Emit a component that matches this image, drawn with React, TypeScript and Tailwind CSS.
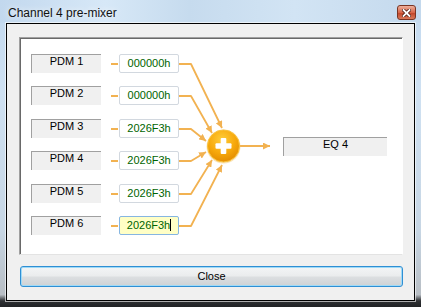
import React from "react";

interface Row {
  name: string;
  value: string;
  focused?: boolean;
}

const rows: Row[] = [
  { name: "PDM 1", value: "000000h" },
  { name: "PDM 2", value: "000000h" },
  { name: "PDM 3", value: "2026F3h" },
  { name: "PDM 4", value: "2026F3h" },
  { name: "PDM 5", value: "2026F3h" },
  { name: "PDM 6", value: "2026F3h", focused: true },
];

// page-space row centres and where each feed line hits the sum node
const mids = [64, 96, 129, 161, 194, 226];
const tips: [number, number][] = [
  [222, 128],
  [212, 133],
  [206, 141],
  [206, 152],
  [212, 160],
  [222, 165],
];

const ORANGE = "#f2b251";

function MixerLines() {
  return (
    <svg
      className="absolute left-0 top-0 pointer-events-none overflow-visible"
      width={382}
      height={216}
    >
      <defs>
        <marker
          id="head"
          viewBox="0 0 8 8"
          refX="8"
          refY="4"
          markerWidth="7"
          markerHeight="7"
          markerUnits="userSpaceOnUse"
          orient="auto"
        >
          <path d="M0,0 L8,4 L0,8 z" fill={ORANGE} />
        </marker>
        <radialGradient id="ball" cx="45%" cy="30%" r="75%">
          <stop offset="0%" stopColor="#ffcd3a" />
          <stop offset="55%" stopColor="#f7a90c" />
          <stop offset="100%" stopColor="#e08800" />
        </radialGradient>
      </defs>
      <g transform="translate(-20,-38)">
        {mids.map((y, i) => (
          <g key={i}>
            <path d={`M111 ${y} H118`} stroke={ORANGE} strokeWidth={2} fill="none" />
            <path
              d={`M179 ${y} H191 L${tips[i][0]} ${tips[i][1]}`}
              stroke={ORANGE}
              strokeWidth={1.8}
              fill="none"
              strokeLinejoin="round"
              markerEnd="url(#head)"
            />
          </g>
        ))}
        <path d="M240 146 H270" stroke={ORANGE} strokeWidth={2} markerEnd="url(#head)" />
        <circle cx={223.5} cy={146.5} r={17} fill="#f6c86a" opacity={0.5} />
        <circle cx={223.5} cy={146} r={16} fill="url(#ball)" stroke="#f9c23c" strokeWidth={1} />
        <rect x={215.5} y={143.2} width={16} height={5.6} rx={1} fill="#fff" />
        <rect x={220.7} y={138} width={5.6} height={16} rx={1} fill="#fff" />
      </g>
    </svg>
  );
}

export default function App() {
  return (
    <div
      className="w-[421px] h-[307px] flex flex-col overflow-hidden bg-[linear-gradient(180deg,#c3d9ef_0%,#cfe1f2_30%,#c7d6e4_75%,#b8bec4_96%,#2e3033_98%,#202224_100%)]"
      style={{ fontFamily: '"Liberation Sans", Arial, sans-serif' }}
    >
      <div className="h-[23px] flex items-center justify-between pl-[8px] pr-[5px] bg-[linear-gradient(90deg,#c2d8ee_0%,#d7e8f7_25%,#c6dbee_45%,#d2e4f4_70%,#c4d9ed_100%)]">
        <span className="text-[12px] text-[#111] leading-none pt-[2px] [text-shadow:0_0_6px_#ffffff]">
          Channel 4 pre-mixer
        </span>
        <div className="w-[19px] h-[15px] rounded-[3px] border border-[#7a3524] bg-[linear-gradient(180deg,#eeb09c_0%,#d7674a_50%,#c2472b_55%,#d97a5b_100%)] flex items-center justify-center mt-[2px]">
          <svg width="9" height="8" viewBox="0 0 9 8">
            <path d="M1.5 1 L7.5 7 M7.5 1 L1.5 7" stroke="#4a1a10" strokeWidth={3.4} strokeLinecap="square" />
            <path d="M1.5 1 L7.5 7 M7.5 1 L1.5 7" stroke="#fff" strokeWidth={1.8} strokeLinecap="square" />
          </svg>
        </div>
      </div>

      <div className="mx-[6px] h-[278px] border border-black bg-[#f0f0f0] flex flex-col shadow-[0_0_0_1px_rgba(255,255,255,0.6)]">
        <div className="relative mt-[13px] ml-[12px] w-[384px] h-[218px] bg-white border border-t-[#a0a0a0] border-l-[#a0a0a0] border-r-white border-b-[#e3e3e3] shadow-[inset_1px_1px_0_#696969] flex">
          <div className="flex flex-col gap-[13.4px] pt-[16px] pl-[11px]">
            {rows.map((r) => (
              <div key={r.name} className="flex h-[19px]">
                <div className="w-[70px] h-[19px] bg-[#f0f0f0] border-t border-l border-[#a0a0a0] text-center text-[11px] leading-[13px] text-black">
                  {r.name}
                </div>
                <div
                  className={
                    r.focused
                      ? "ml-[18px] w-[60px] h-[19px] rounded-[2px] border border-[#86b6e2] bg-[#ffffc6] text-center text-[11px] leading-[17px] text-[#006400]"
                      : "ml-[18px] w-[60px] h-[19px] rounded-[2px] border border-[#d2d8df] bg-white text-center text-[11px] leading-[17px] text-[#006400]"
                  }
                >
                  {r.value}
                  {r.focused && (
                    <span className="inline-block w-px h-[12px] bg-black align-[-2px]" />
                  )}
                </div>
              </div>
            ))}
          </div>
          <div className="ml-[104px] mt-[99px] w-[104px] h-[19px] bg-[#f0f0f0] border-t border-l border-[#a0a0a0] text-center text-[11px] leading-[13px] text-black">
            EQ 4
          </div>
          <MixerLines />
        </div>

        <button className="mt-[11px] ml-[13px] w-[383px] h-[21px] rounded-[3px] border border-[#2f8fd4] shadow-[inset_0_0_0_1px_#9fdaf7] bg-[linear-gradient(180deg,#f3f5f6_0%,#eaeced_48%,#dcdfe1_52%,#ced2d5_100%)] text-[11px] leading-[19px] text-black">
          Close
        </button>
      </div>
    </div>
  );
}
